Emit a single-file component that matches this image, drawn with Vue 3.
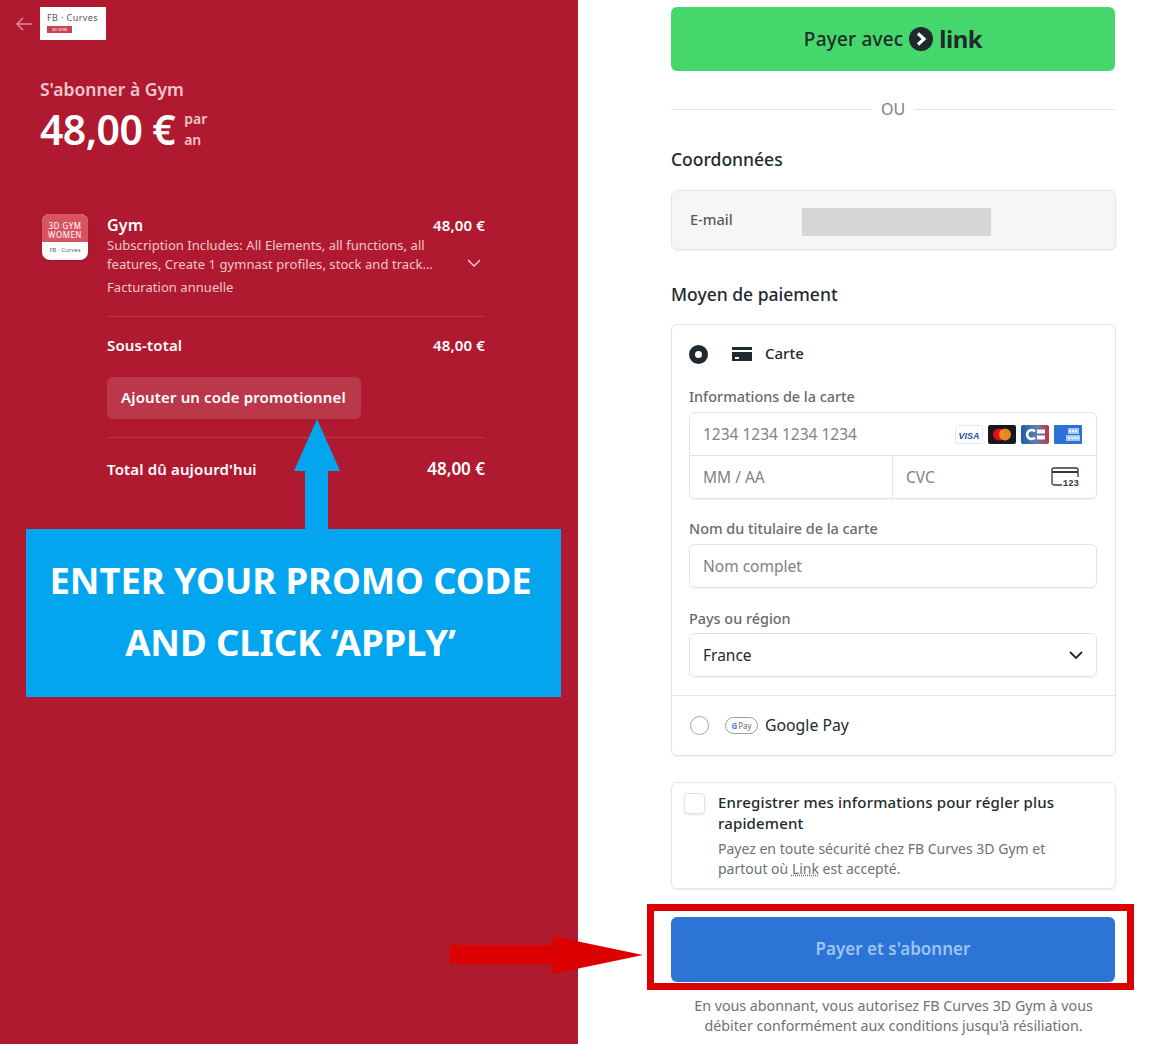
<script setup>
const items = { total: "48,00 €" };
</script>

<template>
  <div class="page">
    <section class="left">
      <div class="top">
        <svg class="back" width="16" height="14" viewBox="0 0 16 14" fill="none" stroke="#e58b98" stroke-width="1.4">
          <path d="M7 1 1 7l6 6M1 7h15" />
        </svg>
        <div class="logo">
          <span class="logo-name">FB · Curves</span>
          <span class="logo-tag">3D GYM</span>
        </div>
      </div>

      <div class="summary">
        <div class="subscribe">S'abonner à Gym</div>
        <div class="price-row">
          <span class="price">{{ items.total }}</span>
          <span class="per">par<br />an</span>
        </div>

        <div class="item">
          <div class="app-icon">
            <div class="app-top">3D GYM<br />WOMEN</div>
            <div class="app-bottom">FB · Curves</div>
          </div>
          <div class="item-body">
            <div class="line">
              <span class="strong big">Gym</span>
              <span class="strong">{{ items.total }}</span>
            </div>
            <div class="desc-row">
              <p class="desc">Subscription Includes: All Elements, all functions, all features, Create 1 gymnast profiles, stock and track...</p>
              <svg class="chev" width="14" height="8" viewBox="0 0 14 8" fill="none" stroke="#f3d3d8" stroke-width="1.3">
                <path d="m1 1 6 6 6-6" />
              </svg>
            </div>
            <div class="billing">Facturation annuelle</div>

            <div class="sep"></div>
            <div class="line subtotal">
              <span class="strong">Sous-total</span>
              <span class="strong">{{ items.total }}</span>
            </div>
            <button class="promo">Ajouter un code promotionnel</button>
            <div class="sep second"></div>
            <div class="line">
              <span class="strong">Total dû aujourd'hui</span>
              <span class="strong total">{{ items.total }}</span>
            </div>
          </div>
        </div>
      </div>

      <svg class="up-arrow" width="48" height="110" viewBox="0 0 48 110">
        <path d="M24 0 47 52H35v58H12V52H1z" fill="#03a5ef" />
      </svg>
      <div class="callout">ENTER YOUR PROMO CODE<br />AND CLICK ‘APPLY’</div>
      <svg class="red-arrow" width="193" height="38" viewBox="0 0 193 38">
        <path d="M0 9h102V0l91 19-91 19V28H0z" fill="#dd0000" />
      </svg>
    </section>

    <section class="right">
      <button class="link-btn">
        <span>Payer avec</span>
        <svg width="24" height="24" viewBox="0 0 24 24">
          <circle cx="12" cy="12" r="12" fill="#1d2b2c" />
          <path d="m9 6.5 6 5.5-6 5.5" fill="none" stroke="#fff" stroke-width="3.2" />
        </svg>
        <span class="link-word">link</span>
      </button>

      <div class="or"><i></i><span>OU</span><i></i></div>

      <h2 class="first">Coordonnées</h2>
      <div class="email-box">
        <span class="email-label">E-mail</span>
        <span class="redacted"></span>
      </div>

      <h2 class="pay-title">Moyen de paiement</h2>
      <div class="pay-card">
        <div class="card-part">
          <div class="method">
            <span class="radio on"></span>
            <svg class="card-ico" width="20" height="14" viewBox="0 0 20 14">
              <path d="M0 0h20v3H0zM0 5h20v9H0z" fill="#1e2a2e" />
              <path d="M3 10h4v2H3z" fill="#fff" />
            </svg>
            <span class="method-name">Carte</span>
          </div>

          <label class="field-label">Informations de la carte</label>
          <div class="card-fields">
            <div class="number">
              <span class="ph">1234 1234 1234 1234</span>
              <div class="brands">
                <svg width="28" height="19" viewBox="0 0 28 19">
                  <rect x=".5" y=".5" width="27" height="18" rx="2" fill="#fff" stroke="#e8e8e8" />
                  <text x="14" y="13.5" text-anchor="middle" class="visa">VISA</text>
                </svg>
                <svg width="28" height="19" viewBox="0 0 28 19">
                  <rect width="28" height="19" rx="2" fill="#16181b" />
                  <circle cx="11" cy="9.5" r="6" fill="#e3101c" />
                  <circle cx="17" cy="9.5" r="6" fill="#f49a1e" opacity=".9" />
                </svg>
                <svg width="28" height="19" viewBox="0 0 28 19">
                  <defs>
                    <linearGradient id="cb" x1="0" x2="1" y1="0" y2="0">
                      <stop offset="0" stop-color="#1d5fa8" />
                      <stop offset=".55" stop-color="#5d7fb0" />
                      <stop offset="1" stop-color="#c9303f" />
                    </linearGradient>
                  </defs>
                  <rect width="28" height="19" rx="2" fill="url(#cb)" />
                  <path d="M14 6.500a4.500 4.500 0 1 0 0 6" fill="none" stroke="#fff" stroke-width="2.600" />
                  <path d="M16 4.500h8v4h-8zM16 10.500h8v4h-8z" fill="#fff" />
                </svg>
                <svg width="28" height="19" viewBox="0 0 28 19">
                  <rect width="28" height="19" rx="1" fill="#2b72d6" />
                  <path d="M14 3h11v6H14zM12 10h14v6H12z" fill="#a4c6f0" />
                  <path d="M15 6h9M14 13h11" stroke="#fff" stroke-width="1.400" stroke-dasharray="2 1" />
                </svg>
              </div>
            </div>
            <div class="split">
              <div class="half"><span class="ph">MM / AA</span></div>
              <div class="half cvc">
                <span class="ph">CVC</span>
                <svg width="28" height="20" viewBox="0 0 28 20" fill="none" stroke="#30383c" stroke-width="1.3">
                  <path d="M11 18H3a2 2 0 0 1-2-2V3a2 2 0 0 1 2-2h22a2 2 0 0 1 2 2v7" />
                  <path d="M1 5h26" stroke-width="2" />
                  <text x="28" y="18.5" text-anchor="end" class="cvc-num">123</text>
                </svg>
              </div>
            </div>
          </div>

          <label class="field-label name-label">Nom du titulaire de la carte</label>
          <div class="input"><span class="ph">Nom complet</span></div>

          <label class="field-label country-label">Pays ou région</label>
          <div class="input select">
            <span class="value">France</span>
            <svg width="14" height="8" viewBox="0 0 14 8" fill="none" stroke="#1e2a2e" stroke-width="1.8">
              <path d="m1 1 6 6 6-6" />
            </svg>
          </div>
        </div>

        <div class="method gpay">
          <span class="radio"></span>
          <span class="gpay-mark"><b>G</b>Pay</span>
          <span class="method-name">Google Pay</span>
        </div>
      </div>

      <div class="save-box">
        <span class="check"></span>
        <div>
          <div class="save-title">Enregistrer mes informations pour régler plus rapidement</div>
          <div class="save-sub">Payez en toute sécurité chez FB Curves 3D Gym et partout où <u>Link</u> est accepté.</div>
        </div>
      </div>

      <div class="submit-wrap">
        <button class="submit">Payer et s'abonner</button>
      </div>
      <p class="terms">En vous abonnant, vous autorisez FB Curves 3D Gym à vous débiter conformément aux conditions jusqu'à résiliation.</p>
    </section>
  </div>
</template>

<style>
html, body {
  margin: 0;
  background: #fff;
}
</style>

<style scoped>
.page {
  display: flex;
  width: 1170px;
  height: 1044px;
  overflow: hidden;
  position: relative;
  font-family: "Noto Sans", "Open Sans", sans-serif;
}

/* left column */
.left {
  width: 578px;
  flex: none;
  background: #b01a30;
  color: #fff;
  padding: 7px 93px 0 16px;
  box-sizing: border-box;
  position: relative;
}

.top {
  display: flex;
  align-items: center;
  gap: 8px;
}

.logo {
  width: 66px;
  height: 33px;
  background: #fff;
  display: flex;
  flex-direction: column;
  padding: 6px 0 0 7px;
  box-sizing: border-box;
}

.logo-name {
  font-size: 9px;
  line-height: 10px;
  color: #555;
  letter-spacing: .4px;
  white-space: nowrap;
}

.logo-tag {
  width: 25px;
  height: 7px;
  background: #c9434f;
  color: #fff;
  font-size: 4px;
  line-height: 7px;
  text-align: center;
  margin-top: 3px;
}

.summary {
  padding-left: 24px;
}

.subscribe {
  margin-top: 37px;
  font-size: 17.5px;
  line-height: 24px;
  font-weight: 600;
  color: #f0c6cc;
}

.price-row {
  display: flex;
  align-items: center;
  gap: 9px;
  margin-top: 5px;
}

.price {
  font-size: 41px;
  line-height: 46px;
  font-weight: 600;
  letter-spacing: -.6px;
}

.per {
  font-size: 14px;
  line-height: 21px;
  font-weight: 600;
  color: #f0c6cc;
}

.item {
  display: flex;
  margin-top: 62px;
}

.app-icon {
  width: 46px;
  height: 46px;
  margin-left: 2px;
  border-radius: 8px;
  overflow: hidden;
  flex: none;
  background: #fff;
  box-shadow: 0 1px 2px rgba(0, 0, 0, .2);
}

.app-top {
  height: 28px;
  background: #d95462;
  font-size: 8px;
  line-height: 9px;
  text-align: center;
  padding-top: 7px;
  box-sizing: border-box;
  letter-spacing: .5px;
}

.app-bottom {
  font-size: 6px;
  line-height: 16px;
  color: #666;
  text-align: center;
}

.item-body {
  flex: 1;
  margin-left: 19px;
}

.line {
  display: flex;
  justify-content: space-between;
  align-items: center;
}

.strong {
  font-size: 15px;
  line-height: 22px;
  font-weight: 600;
  letter-spacing: .15px;
}

.strong.big {
  font-size: 16px;
}

.strong.total {
  font-size: 17px;
  letter-spacing: 0;
}

.desc-row {
  display: flex;
  align-items: center;
  justify-content: space-between;
}

.desc {
  margin: 0;
  width: 335px;
  font-size: 13px;
  line-height: 19px;
  color: #f0c6cc;
  letter-spacing: .05px;
}

.chev {
  margin: 16px 4px 0 0;
}

.billing {
  margin-top: 4px;
  font-size: 13px;
  line-height: 18px;
  color: #f0c6cc;
  letter-spacing: .05px;
}

.sep {
  height: 1px;
  background: rgba(255, 255, 255, .12);
  margin: 20px 0 17px;
}

.subtotal {
  margin-bottom: 21px;
}

.promo {
  display: block;
  width: 254px;
  height: 42px;
  border: 0;
  border-radius: 6px;
  background: #bb384b;
  color: #fff;
  font: 600 15px "Noto Sans", sans-serif;
  letter-spacing: .15px;
  padding: 0 0 2px 14px;
  text-align: left;
}

.sep.second {
  margin: 18px 0 20px;
}

.up-arrow {
  position: absolute;
  left: 293px;
  top: 419px;
}

.callout {
  position: absolute;
  left: 26px;
  top: 529px;
  width: 535px;
  height: 168px;
  background: #03a5ef;
  font-size: 36.5px;
  line-height: 62px;
  font-weight: 700;
  text-align: center;
  padding: 20px 6px 0 0;
  box-sizing: border-box;
  letter-spacing: -.1px;
}

.red-arrow {
  position: absolute;
  left: 450px;
  top: 936px;
  z-index: 2;
  overflow: visible;
}

/* right column */
.right {
  width: 445px;
  margin-left: 93px;
  padding-top: 7px;
  color: #1e2a2e;
}

button {
  cursor: pointer;
}

.link-btn {
  width: 444px;
  height: 64px;
  border: 0;
  border-radius: 6px;
  background: #45d76c;
  display: flex;
  align-items: center;
  justify-content: center;
  gap: 6px;
  color: #1d2b2c;
  font: 500 19px "Noto Sans", sans-serif;
  letter-spacing: .2px;
}

.link-word {
  font-size: 24px;
  font-weight: 700;
  letter-spacing: -.5px;
  line-height: 24px;
  margin: 0 0 1px 0;
}

.or {
  display: flex;
  align-items: center;
  gap: 9px;
  width: 444px;
  margin-top: 27px;
  color: #7b8085;
  font-size: 16px;
  line-height: 22px;
}

.or i {
  flex: 1;
  height: 1px;
  background: #e4e4e4;
}

h2 {
  margin: 0;
  font-size: 17.5px;
  line-height: 24px;
  font-weight: 500;
}

h2.first {
  margin-top: 27px;
}

.email-box {
  margin-top: 19px;
  height: 60px;
  box-sizing: border-box;
  border: 1px solid #e6e6e6;
  border-radius: 6px;
  background: #f6f6f6;
  box-shadow: 0 1px 2px rgba(0, 0, 0, .06);
  display: flex;
  align-items: center;
  padding-left: 18px;
}

.email-label {
  width: 112px;
  font-size: 14.5px;
  font-weight: 500;
  color: #555c60;
  margin-bottom: 2px;
}

.redacted {
  width: 189px;
  height: 28px;
  margin-top: 4px;
  background: #d6d6d6;
}

.pay-title {
  margin-top: 32px;
}

.pay-card {
  margin-top: 18px;
  height: 432px;
  box-sizing: border-box;
  border: 1px solid #e3e3e3;
  border-radius: 6px;
  box-shadow: 0 1px 2px rgba(0, 0, 0, .06);
  display: flex;
  flex-direction: column;
}

.card-part {
  padding: 0 18px 0 17px;
  height: 371px;
  box-sizing: border-box;
  flex: none;
  border-bottom: 1px solid #e6e6e6;
}

.method {
  display: flex;
  align-items: center;
  height: 58px;
}

.radio {
  width: 19px;
  height: 19px;
  box-sizing: border-box;
  border-radius: 50%;
  border: 1px solid #a8a8a8;
  flex: none;
}

.radio.on {
  border: 6px solid #1e2a2e;
}

.card-ico {
  margin-left: 24px;
}

.method-name {
  margin: 0 0 2px 13px;
  font-size: 15px;
  font-weight: 500;
}

.gpay {
  padding-left: 18px;
  height: 59px;
}

.gpay .method-name {
  margin-left: 7px;
  font-weight: 400;
  font-size: 15.8px;
}

.gpay-mark {
  margin-left: 16px;
  width: 33px;
  height: 17px;
  border: 1px solid #9a9a9a;
  border-radius: 9px;
  box-sizing: border-box;
  font-size: 8px;
  line-height: 15px;
  text-align: center;
  color: #666;
}

.gpay-mark b {
  color: #4285f4;
  margin-right: 1px;
}

.field-label {
  display: block;
  font-size: 14.4px;
  line-height: 20px;
  font-weight: 500;
  color: #656c70;
  margin-top: 4px;
}

.card-fields {
  margin-top: 5px;
  border: 1px solid #e3e3e3;
  border-radius: 6px;
  box-shadow: 0 1px 2px rgba(0, 0, 0, .06);
}

.number {
  height: 42px;
  display: flex;
  align-items: center;
  justify-content: space-between;
  padding: 0 14px 0 13px;
  border-bottom: 1px solid #e3e3e3;
}

.brands {
  display: flex;
  gap: 5px;
}

.ph {
  font-size: 15.5px;
  color: #7d8286;
}

.split {
  display: flex;
  height: 42px;
}

.half {
  width: 50%;
  box-sizing: border-box;
  display: flex;
  align-items: center;
  justify-content: space-between;
  padding: 0 17px 0 13px;
}

.half:first-child {
  border-right: 1px solid #e3e3e3;
}

.visa {
  font: italic 700 9px "Liberation Sans", sans-serif;
  fill: #2a4f9c;
}

.cvc-num {
  font: 700 9px "Liberation Mono", monospace;
  fill: #30383c;
  stroke: none;
}

.name-label {
  margin-top: 20px;
}

.country-label {
  margin-top: 21px;
}

.input {
  margin-top: 5px;
  height: 44px;
  box-sizing: border-box;
  border: 1px solid #e3e3e3;
  border-radius: 6px;
  box-shadow: 0 1px 2px rgba(0, 0, 0, .06);
  display: flex;
  align-items: center;
  padding: 0 13px;
}

.select {
  justify-content: space-between;
  margin-top: 4px;
}

.value {
  font-size: 15.5px;
  color: #1e2a2e;
}

.save-box {
  margin-top: 26px;
  height: 107px;
  box-sizing: border-box;
  border: 1px solid #e6e6e6;
  border-radius: 6px;
  box-shadow: 0 1px 2px rgba(0, 0, 0, .08);
  display: flex;
  gap: 13px;
  padding: 9px 12px;
}

.check {
  width: 21px;
  height: 21px;
  margin-top: 1px;
  flex: none;
  box-sizing: border-box;
  border: 1px solid #e2e2e2;
  border-radius: 4px;
  box-shadow: 0 1px 2px rgba(0, 0, 0, .1);
}

.save-title {
  font-size: 15px;
  line-height: 21px;
  font-weight: 500;
  letter-spacing: .15px;
}

.save-sub {
  margin-top: 5px;
  max-width: 345px;
  font-size: 14px;
  line-height: 20px;
  color: #6c7276;
}

.save-sub u {
  text-decoration: underline dotted;
}

.submit-wrap {
  margin: 15px -18px 0 -24px;
  height: 86px;
  box-sizing: border-box;
  border: 7px solid #dd0000;
  padding: 6px 12px 0 17px;
}

.submit {
  display: block;
  width: 444px;
  height: 65px;
  border: 0;
  border-radius: 6px;
  background: #2c74d6;
  color: #9cc4f1;
  font: 600 17px "Noto Sans", sans-serif;
  padding: 0 0 2px;
}

.terms {
  margin: 6px -6px 0;
  font-size: 14.25px;
  line-height: 20px;
  text-align: center;
  color: #6c7276;
  padding: 0 14px;
}
</style>
